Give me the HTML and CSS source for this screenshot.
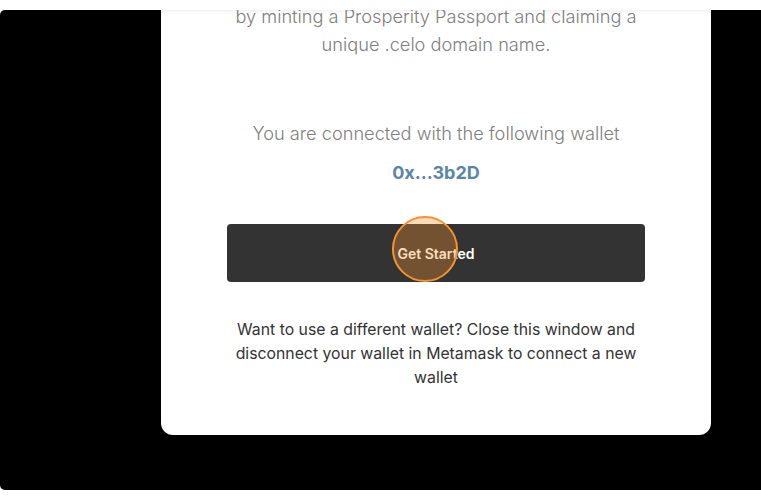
FILE: index.html
```html
<!DOCTYPE html>
<html lang="en">
<head>
<meta charset="utf-8">
<title>Prosperity Passport</title>
<link rel="stylesheet" href="styles.css">
</head>
<body>
  <header class="topbar"></header>
  <main class="backdrop">
    <section class="card">
      <p class="lead">by minting a Prosperity Passport and claiming a<br>unique .celo domain name.</p>
      <p class="lead connected">You are connected with the following wallet</p>
      <p class="wallet">0x...3b2D</p>
      <div class="btn-wrap">
        <button class="btn" type="button">Get Started</button>
        <span class="click-ring"></span>
      </div>
      <p class="note">Want to use a different wallet? Close this window and disconnect your wallet in Metamask to connect a new wallet</p>
    </section>
  </main>
</body>
</html>
```

FILE: styles.css
```css
html, body {
  margin: 0;
  padding: 0;
  background: #ffffff;
  font-family: Inter, "Noto Sans", sans-serif;
}

.topbar {
  position: relative;
  z-index: 2;
  height: 10px;
  background: #ffffff;
  box-shadow: 0 1px 5px rgba(0, 0, 0, 0.08);
}

.backdrop {
  height: 480px;
  background: #000000;
  border-radius: 5px 0 0 5px;
  overflow: hidden;
  display: flex;
  align-items: flex-start;
  padding-left: 161px;
  box-sizing: border-box;
}

.card {
  width: 550px;
  margin-top: -8px;
  background: #ffffff;
  border-radius: 0 0 12px 12px;
  padding: 0 60px 45px;
  box-sizing: border-box;
  display: flex;
  flex-direction: column;
  align-items: stretch;
  text-align: center;
}

.lead {
  margin: 0;
  font-size: 18.2px;
  line-height: 28px;
  font-weight: 300;
  color: #808080;
  white-space: nowrap;
}

.connected {
  margin-top: 61px;
}

.wallet {
  margin: 12px 0 0;
  font-size: 18px;
  line-height: 28px;
  font-weight: 700;
  color: #5a86a6;
}

.btn-wrap {
  position: relative;
  margin: 37px 6px 0;
}

.btn {
  display: block;
  width: 100%;
  height: 58px;
  border: none;
  border-radius: 4px;
  background: #333333;
  color: #ffffff;
  font-family: Inter, "Noto Sans", sans-serif;
  font-size: 14px;
  font-weight: 600;
  cursor: pointer;
}

.click-ring {
  position: absolute;
  left: 165px;
  top: -8px;
  width: 66px;
  height: 66px;
  box-sizing: border-box;
  border: 2px solid #f7922f;
  border-radius: 50%;
  background: rgba(247, 146, 47, 0.33);
  pointer-events: none;
}

.note {
  margin: 36px 0 0;
  font-size: 15.8px;
  line-height: 24px;
  font-weight: 400;
  color: #333333;
}
```
